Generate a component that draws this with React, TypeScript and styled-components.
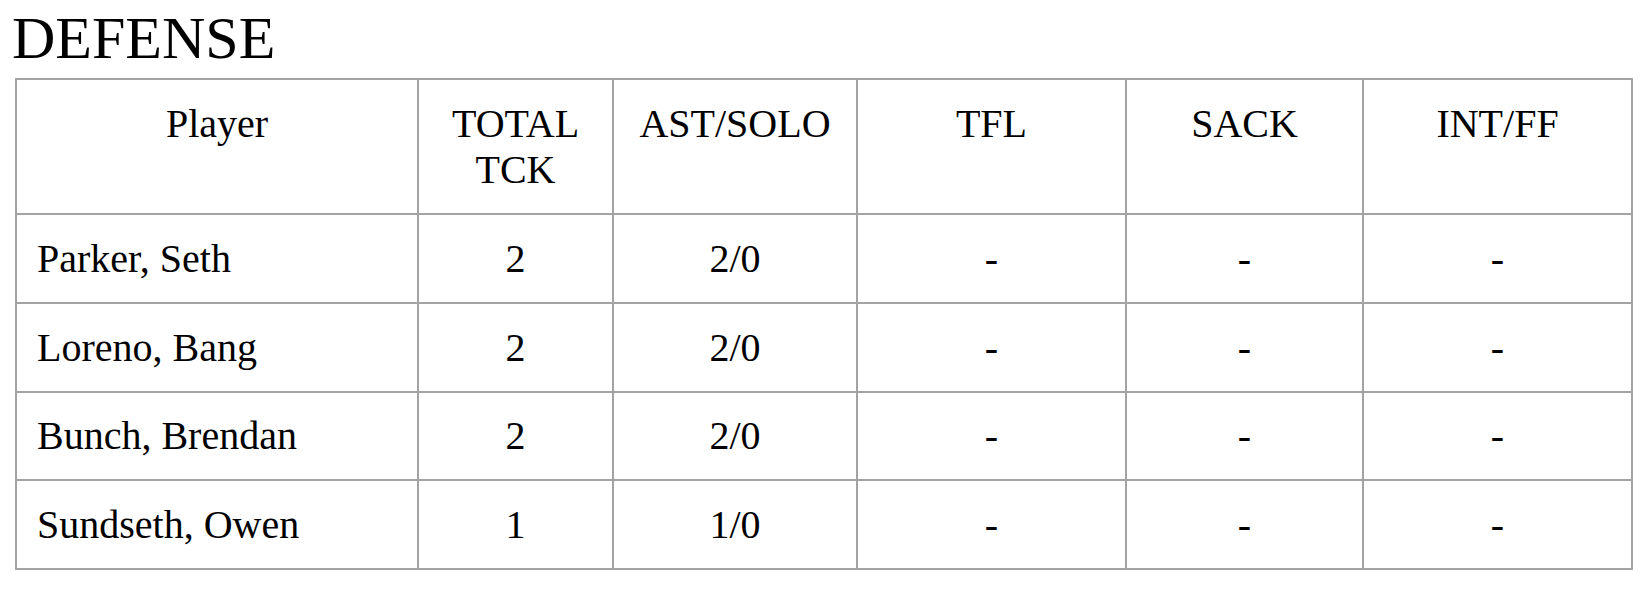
import React from 'react'
import styled, { createGlobalStyle } from 'styled-components'

type Row = {
    name: string
    total: string
    astSolo: string
    tfl: string
    sack: string
    intFf: string
}

const headers = ['Player', 'TOTAL TCK', 'AST/SOLO', 'TFL', 'SACK', 'INT/FF']

const rows: Row[] = [
    { name: 'Parker, Seth', total: '2', astSolo: '2/0', tfl: '-', sack: '-', intFf: '-' },
    { name: 'Loreno, Bang', total: '2', astSolo: '2/0', tfl: '-', sack: '-', intFf: '-' },
    { name: 'Bunch, Brendan', total: '2', astSolo: '2/0', tfl: '-', sack: '-', intFf: '-' },
    { name: 'Sundseth, Owen', total: '1', astSolo: '1/0', tfl: '-', sack: '-', intFf: '-' },
]

const GlobalStyle = createGlobalStyle`
    body {
        margin: 0;
        background: #fff;
        color: #000;
        font-family: "Liberation Serif", "Times New Roman", serif;
    }
`

const App = () => {
    return (
        <Page>
            <GlobalStyle />
            <Title>DEFENSE</Title>
            <StatGrid>
                {headers.map(h => <HeadCell key={h}>{h}</HeadCell>)}
                {rows.map(r => (
                    <React.Fragment key={r.name}>
                        <Cell left>{r.name}</Cell>
                        <Cell>{r.total}</Cell>
                        <Cell>{r.astSolo}</Cell>
                        <Cell>{r.tfl}</Cell>
                        <Cell>{r.sack}</Cell>
                        <Cell>{r.intFf}</Cell>
                    </React.Fragment>
                ))}
            </StatGrid>
        </Page>
    )
}

const Page = styled.div`
    padding: 4px 0 0 15px;
    font-family: "Liberation Serif", "Times New Roman", serif;
`

const Title = styled.h1`
    margin: 0 0 5px -3px;
    font-size: 60px;
    font-weight: 400;
    line-height: 69px;
`

const StatGrid = styled.div`
    display: grid;
    width: 1614px;
    grid-template-columns: 400px 193px 242px 267px 235px 267px;
    grid-template-rows: 133px 87px 87px 86px 87px;
    gap: 2px;
    border: 2px solid #a3a3a3;
    background: #a3a3a3;
`

const HeadCell = styled.div`
    background: #fff;
    padding: 21px 20px 0;
    font-size: 40px;
    line-height: 46px;
    text-align: center;
`

const Cell = styled.div<{ left?: boolean }>`
    display: flex;
    align-items: center;
    justify-content: ${(prop) => (prop.left ? 'flex-start' : 'center')};
    background: #fff;
    padding: 0 20px;
    font-size: 40px;
    line-height: 46px;
`

export default App
